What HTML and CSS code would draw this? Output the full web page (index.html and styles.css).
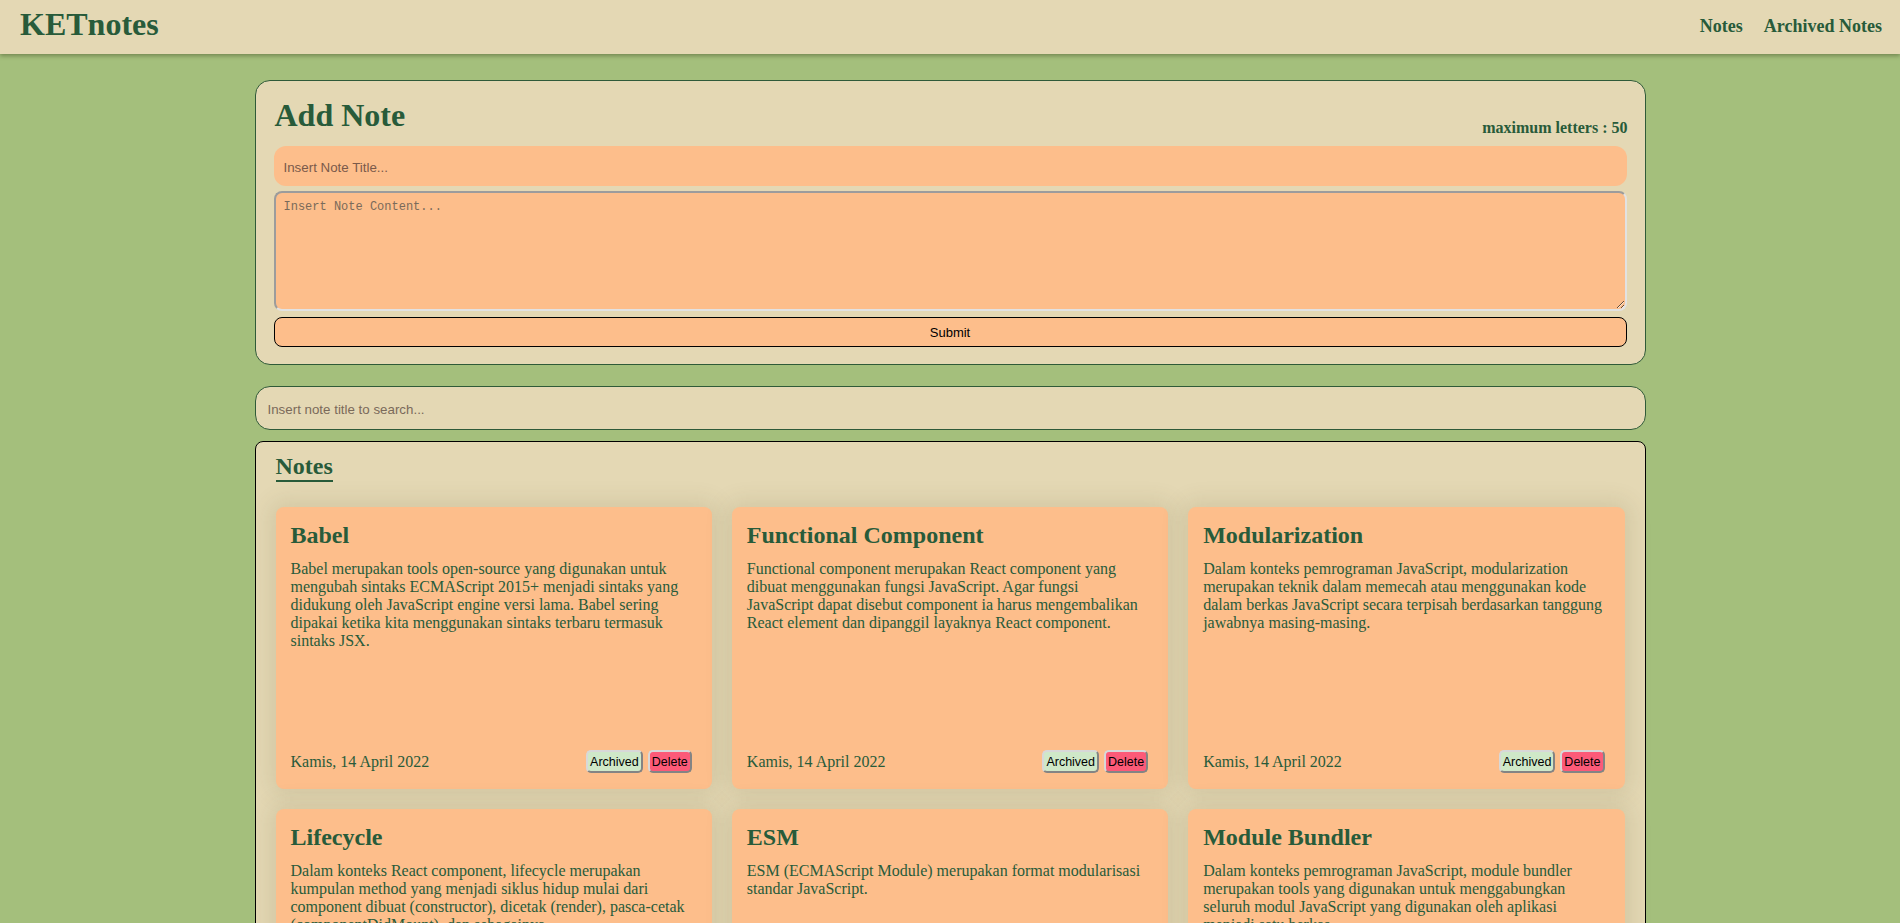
FILE: index.html
```html
<!DOCTYPE html>
<html lang="id">
<head>
<meta charset="utf-8">
<title>KETnotes</title>
<link rel="stylesheet" href="styles.css">
</head>
<body>
<header class="topbar">
  <h1 class="logo">KETnotes</h1>
  <nav class="nav">
    <a class="nav-link" href="#">Notes</a>
    <a class="nav-link" href="#">Archived Notes</a>
  </nav>
</header>
<main class="main">
  <section class="panel add-panel">
    <div class="add-head">
      <h1 class="add-title">Add Note</h1>
      <p class="limit">maximum letters : 50</p>
    </div>
    <form class="add-form">
      <input class="title-input" type="text" placeholder="Insert Note Title...">
      <textarea class="content-input" placeholder="Insert Note Content..."></textarea>
      <button class="submit-btn" type="button">Submit</button>
    </form>
  </section>
  <input class="search" type="text" placeholder="Insert note title to search...">
  <section class="notes-panel">
    <h2 class="notes-heading">Notes</h2>
    <div class="notes-grid">
      <article class="card">
        <h2 class="card-title">Babel</h2>
        <p class="card-body">Babel merupakan tools open-source yang digunakan untuk mengubah sintaks ECMAScript 2015+ menjadi sintaks yang didukung oleh JavaScript engine versi lama. Babel sering dipakai ketika kita menggunakan sintaks terbaru termasuk sintaks JSX.</p>
        <div class="card-foot">
          <span class="card-date">Kamis, 14 April 2022</span>
          <div class="card-actions"><button class="btn btn-archive" type="button">Archived</button><button class="btn btn-delete" type="button">Delete</button></div>
        </div>
      </article>
      <article class="card">
        <h2 class="card-title">Functional Component</h2>
        <p class="card-body">Functional component merupakan React component yang dibuat menggunakan fungsi JavaScript. Agar fungsi JavaScript dapat disebut component ia harus mengembalikan React element dan dipanggil layaknya React component.</p>
        <div class="card-foot">
          <span class="card-date">Kamis, 14 April 2022</span>
          <div class="card-actions"><button class="btn btn-archive" type="button">Archived</button><button class="btn btn-delete" type="button">Delete</button></div>
        </div>
      </article>
      <article class="card">
        <h2 class="card-title">Modularization</h2>
        <p class="card-body">Dalam konteks pemrograman JavaScript, modularization merupakan teknik dalam memecah atau menggunakan kode dalam berkas JavaScript secara terpisah berdasarkan tanggung jawabnya masing-masing.</p>
        <div class="card-foot">
          <span class="card-date">Kamis, 14 April 2022</span>
          <div class="card-actions"><button class="btn btn-archive" type="button">Archived</button><button class="btn btn-delete" type="button">Delete</button></div>
        </div>
      </article>
      <article class="card">
        <h2 class="card-title">Lifecycle</h2>
        <p class="card-body">Dalam konteks React component, lifecycle merupakan kumpulan method yang menjadi siklus hidup mulai dari component dibuat (constructor), dicetak (render), pasca-cetak (componentDidMount), dan sebagainya.</p>
        <div class="card-foot">
          <span class="card-date">Kamis, 14 April 2022</span>
          <div class="card-actions"><button class="btn btn-archive" type="button">Archived</button><button class="btn btn-delete" type="button">Delete</button></div>
        </div>
      </article>
      <article class="card">
        <h2 class="card-title">ESM</h2>
        <p class="card-body">ESM (ECMAScript Module) merupakan format modularisasi standar JavaScript.</p>
        <div class="card-foot">
          <span class="card-date">Kamis, 14 April 2022</span>
          <div class="card-actions"><button class="btn btn-archive" type="button">Archived</button><button class="btn btn-delete" type="button">Delete</button></div>
        </div>
      </article>
      <article class="card">
        <h2 class="card-title">Module Bundler</h2>
        <p class="card-body">Dalam konteks pemrograman JavaScript, module bundler merupakan tools yang digunakan untuk menggabungkan seluruh modul JavaScript yang digunakan oleh aplikasi menjadi satu berkas.</p>
        <div class="card-foot">
          <span class="card-date">Kamis, 14 April 2022</span>
          <div class="card-actions"><button class="btn btn-archive" type="button">Archived</button><button class="btn btn-delete" type="button">Delete</button></div>
        </div>
      </article>
    </div>
  </section>
</main>
</body>
</html>
```

FILE: styles.css
```css
html {
  scrollbar-width: none;
}
body {
  margin: 0;
  background: #a4bf7c;
  font-family: "Liberation Serif", "Times New Roman", serif;
  color: #285b3a;
}
.topbar {
  display: flex;
  align-items: center;
  justify-content: space-between;
  background: #e4d8b4;
  padding: 6px 18px 11px 20px;
  box-shadow: 0 2px 4px rgba(60, 70, 30, 0.45);
}
.logo {
  margin: 0;
  font-size: 32px;
  font-weight: bold;
}
.nav {
  display: flex;
  gap: 21px;
  padding-top: 4px;
}
.nav-link {
  color: #285b3a;
  text-decoration: none;
  font-weight: bold;
  font-size: 18px;
}
.main {
  width: 1391px;
  margin: 26px auto 0;
}
.panel {
  background: #e4d8b4;
  border: 1px solid #2f5a38;
  border-radius: 15px;
}
.add-panel {
  padding: 16px 18px 17px 19px;
}
.add-head {
  display: flex;
  justify-content: space-between;
  align-items: flex-end;
}
.add-title {
  margin: 0;
  font-size: 32px;
}
.limit {
  margin: 0 -1px -3px 0;
  font-size: 16px;
  font-weight: bold;
}
.add-form {
  display: flex;
  flex-direction: column;
  margin: 12px 0 0 -1px;
}
.title-input {
  height: 40px;
  box-sizing: border-box;
  border: none;
  border-radius: 12px;
  background: #fdbe8b;
  padding: 2px 10px 0;
  font-family: "Liberation Sans", Arial, sans-serif;
  font-size: 13.33px;
  color: #333;
}
.title-input::placeholder {
  color: #7a5a4a;
}
.content-input {
  margin-top: 5px;
  height: 120px;
  box-sizing: border-box;
  border-style: solid;
  border-width: 2px;
  border-color: #9c9c9c #e2e2e2 #e2e2e2 #9c9c9c;
  border-radius: 8px;
  background: #fdbe8b;
  padding: 7px 8px 5px;
  font-family: "Liberation Mono", "Courier New", monospace;
  font-size: 12px;
  resize: vertical;
}
.content-input::placeholder {
  color: #7a6a5a;
}
.submit-btn {
  margin-top: 6px;
  height: 30px;
  border: 1px solid #000;
  border-radius: 8px;
  background: #fdbe8b;
  font-family: "Liberation Sans", Arial, sans-serif;
  font-size: 13px;
  color: #000;
}
.search {
  display: block;
  width: 100%;
  box-sizing: border-box;
  margin-top: 21px;
  height: 44px;
  border: 1px solid #2f5a38;
  border-radius: 15px;
  background: #e4d8b4;
  padding: 2px 12px 0;
  font-family: "Liberation Sans", Arial, sans-serif;
  font-size: 13.33px;
}
.search::placeholder {
  color: #7a6a5a;
}
.notes-panel {
  margin-top: 11px;
  background: #e4d8b4;
  border: 1px solid #000;
  border-radius: 8px;
  padding: 10px 20px 20px;
}
.notes-heading {
  display: inline-block;
  margin: 0;
  font-size: 24px;
  line-height: 28px;
  border-bottom: 2px solid #285b3a;
}
.notes-grid {
  display: grid;
  grid-template-columns: repeat(3, 1fr);
  gap: 20px;
  margin-top: 25px;
}
.card {
  display: flex;
  flex-direction: column;
  height: 282px;
  box-sizing: border-box;
  background: #fdbe8b;
  border-radius: 8px;
  padding: 15px 20px 16px 15px;
  box-shadow: 0 0 22px 6px rgba(90, 80, 40, 0.12);
}
.card-title {
  margin: 0;
  font-size: 24px;
}
.card-body {
  flex: 1;
  margin: 11px 0 0;
  font-size: 16px;
}
.card-foot {
  display: flex;
  justify-content: space-between;
  align-items: center;
}
.card-date {
  font-size: 16px;
}
.card-actions {
  display: flex;
  gap: 5px;
}
.btn {
  height: 23px;
  padding: 0 2px;
  border: 2px outset #d8d8d8;
  border-radius: 5px;
  font-family: "Liberation Sans", Arial, sans-serif;
  font-size: 12.5px;
  color: #000;
}
.btn-archive {
  background: #cfe8c8;
}
.btn-delete {
  background: #fc5a78;
}
```
